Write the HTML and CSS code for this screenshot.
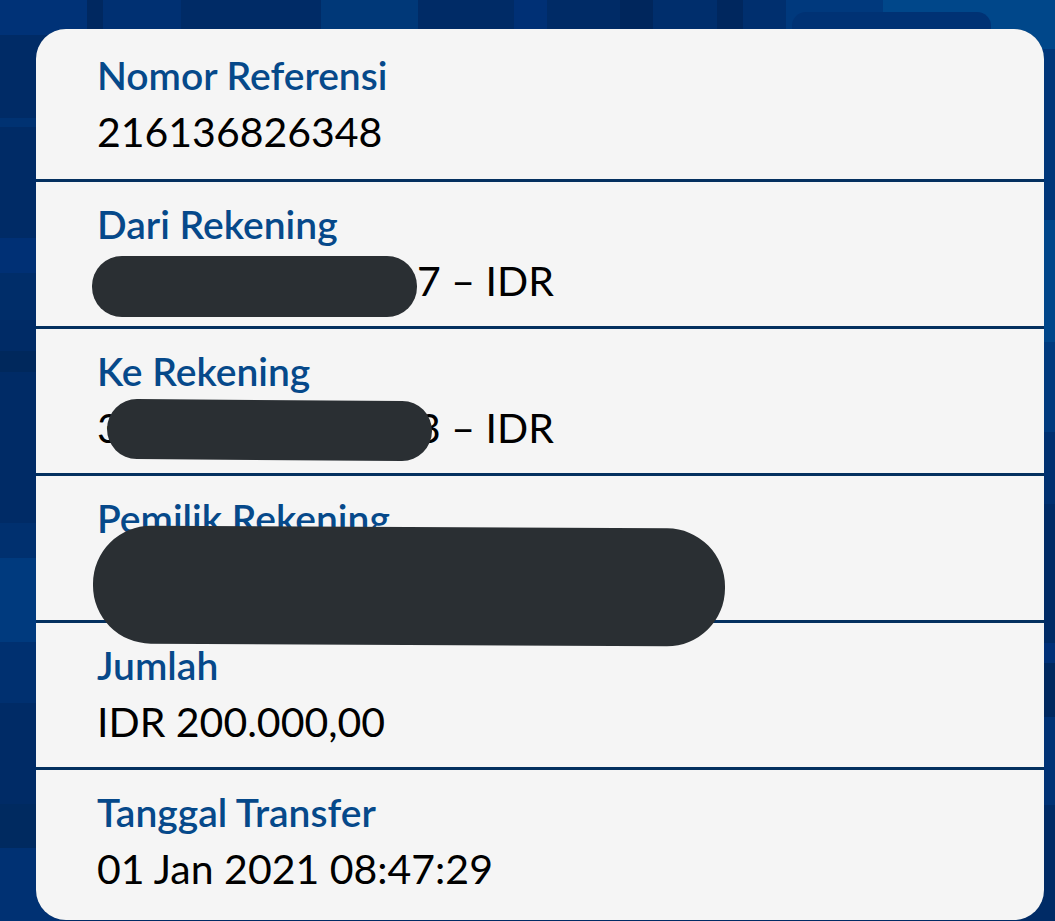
FILE: index.html
```html
<!DOCTYPE html>
<html lang="id">
  <head>
    <meta charset="utf-8" />
    <meta name="viewport" content="width=device-width, initial-scale=1" />
    <title>Detail Transfer</title>
    <link rel="stylesheet" href="styles.css">
  </head>
  <body>
    <svg class="backdrop" viewBox="0 0 1055 921" preserveAspectRatio="none" aria-hidden="true">
      <rect width="1055" height="921" fill="#002b66" />
      <!-- top blocks -->
      <rect width="87" height="35" fill="#003277" />
      <rect x="87" width="16" height="35" fill="#002860" />
      <rect x="103" width="78" height="35" fill="#003072" />
      <rect x="321" width="97" height="35" fill="#003878" />
      <rect x="514" width="33" height="35" fill="#003075" />
      <rect x="620" width="33" height="35" fill="#00265c" />
      <rect x="653" width="64" height="35" fill="#002e6c" />
      <rect x="717" width="26" height="35" fill="#00275e" />
      <rect x="743" width="43" height="35" fill="#002f6e" />
      <rect x="786" width="97" height="50" fill="#00397d" />
      <rect x="883" width="172" height="49" fill="#00478a" />
      <rect x="792" y="12" width="199" height="60" rx="14" fill="#003274" />
      <!-- left blocks -->
      <rect y="118" width="60" height="9" fill="#003272" />
      <rect y="238" width="60" height="35" fill="#003075" />
      <rect y="273" width="60" height="47" fill="#002d69" />
      <rect y="351" width="60" height="21" fill="#00285c" />
      <rect y="523" width="60" height="35" fill="#00306f" />
      <rect y="558" width="60" height="84" fill="#003a7e" />
      <rect y="642" width="60" height="61" fill="#003070" />
      <rect y="804" width="60" height="44" fill="#002a60" />
      <rect y="848" width="60" height="73" fill="#003173" />
      <!-- right blocks -->
      <rect x="1000" y="49" width="55" height="171" fill="#003679" />
      <rect x="1000" y="220" width="55" height="122" fill="#00468a" />
      <rect x="1000" y="342" width="55" height="90" fill="#003a7e" />
      <rect x="1000" y="432" width="55" height="72" fill="#003070" />
      <rect x="1000" y="643" width="55" height="20" fill="#003078" />
      <rect x="1000" y="663" width="55" height="54" fill="#00285f" />
      <rect x="1000" y="717" width="55" height="88" fill="#003275" />
    </svg>

    <dl class="card">
      <div class="row">
        <dt>Nomor Referensi</dt>
        <dd>216136826348</dd>
      </div>
      <div class="row">
        <dt>Dari Rekening</dt>
        <dd class="account">
          <span class="tail">7 – IDR</span>
          <span class="redact redact-from"></span>
        </dd>
      </div>
      <div class="row">
        <dt>Ke Rekening</dt>
        <dd class="account">
          <span class="head">3</span>
          <span class="tail">3 – IDR</span>
          <span class="redact redact-to"></span>
        </dd>
      </div>
      <div class="row">
        <dt>Pemilik Rekening</dt>
        <dd><span class="redact redact-owner"></span></dd>
      </div>
      <div class="row">
        <dt>Jumlah</dt>
        <dd>IDR 200.000,00</dd>
      </div>
      <div class="row">
        <dt>Tanggal Transfer</dt>
        <dd>01 Jan 2021 08:47:29</dd>
      </div>
    </dl>
  </body>
</html>
```
FILE: styles.css
```css
* {
  margin: 0;
  padding: 0;
  box-sizing: border-box;
}
body {
  min-height: 100vh;
  padding: 29px 11px 1px 36px;
  background: #002b66;
  font-family: Lato, "Open Sans", sans-serif;
}
.backdrop {
  position: fixed;
  inset: 0;
  width: 100%;
  height: 100%;
  z-index: -1;
}
.card {
  display: flex;
  flex-direction: column;
  gap: 3px;
  border-radius: 30px;
  background: #04305f;
}
.row {
  position: relative;
  min-height: 144px;
  padding: 18px 61px 12px;
  background: #f5f5f5;
}
.row:first-child {
  padding-top: 22px;
  padding-bottom: 14px;
  border-radius: 30px 30px 0 0;
}
.row:last-child {
  padding-bottom: 18px;
  border-radius: 0 0 30px 30px;
}
dt {
  color: #06498a;
  font-size: 39px;
  font-weight: 600;
  line-height: 48px;
}
dd {
  min-height: 66px;
  color: #000;
  font-size: 41px;
  line-height: 66px;
}
.account {
  display: flex;
}
.head {
  width: 0;
}
.tail {
  margin-left: 320px;
}
/* redaction bars lie over the account data */
.redact {
  position: absolute;
  z-index: 1;
  background: #2a2f33;
}
.redact-from {
  top: 74px;
  left: 56px;
  width: 325px;
  height: 61px;
  border-radius: 30px;
}
.redact-to {
  top: 71px;
  left: 71px;
  width: 325px;
  height: 60px;
  border-radius: 30px;
  transform: rotate(0.4deg);
}
.redact-owner {
  top: 51px;
  left: 57px;
  width: 632px;
  height: 118px;
  border-radius: 58px;
  transform: rotate(0.3deg);
}
```
